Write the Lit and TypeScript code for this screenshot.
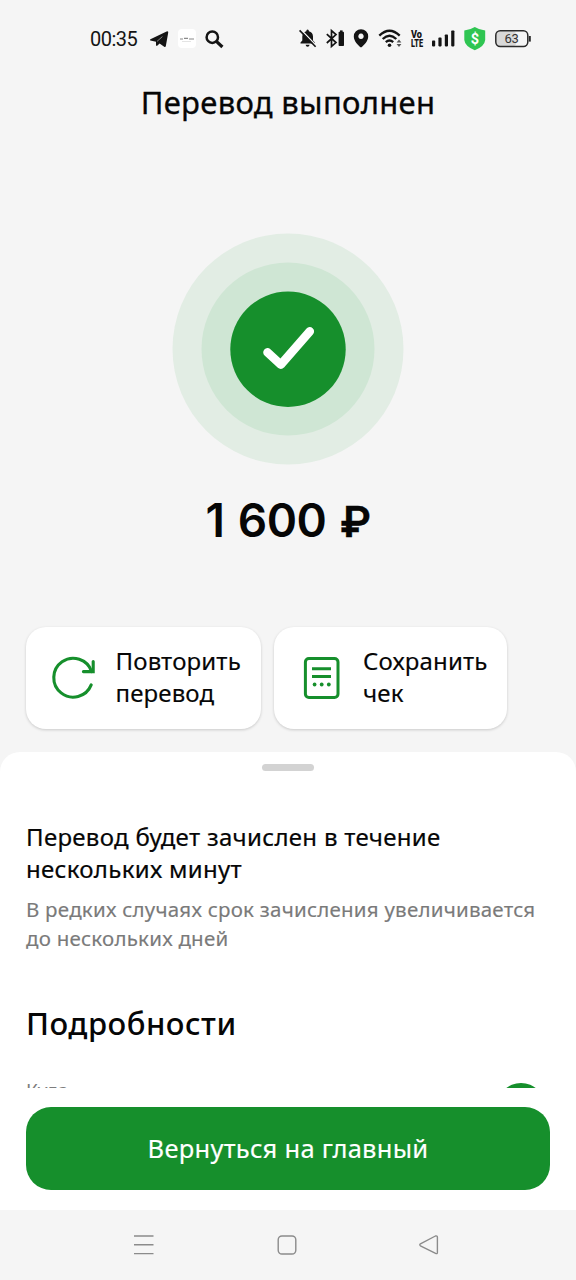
import { LitElement, html, css } from "lit";
import { customElement } from "lit/decorators.js";

@customElement("status-bar")
class StatusBar extends LitElement {
  static styles = css`
    :host { display: block; height: 78px; box-sizing: border-box; padding: 26px 44px 0 90px; font-family: Roboto, sans-serif; color: #141414; }
    .row { display: flex; justify-content: space-between; height: 26px; }
    .side { display: flex; }
    .time { width: 59px; font-size: 20px; line-height: 26px; letter-spacing: -0.5px; }
    .g8 { margin-right: 8px; }
    .g9 { margin-right: 9px; }
    .g10 { margin-right: 10px; }
    svg { display: block; flex: none; overflow: visible; }
    text { font-family: Roboto, sans-serif; }
  `;
  render() {
    return html`
      <div class="row">
        <div class="side">
          <span class="time">00:35</span>
          <svg class="g9" width="20" height="26" viewBox="149 26 20 26" fill="#141414">
            <path d="M150.4 39.2 L166.6 31.4 Q168.6 30.8 168.2 32.8 L165.8 46.2 Q165.4 47.4 164.2 46.7 L159.6 43.4 L157.2 45.8 Q156 46.4 156 44.8 L156 41.8 L150.4 40.4 Q149.4 39.9 150.4 39.2Z"/>
            <path d="M157 41.4 L162.4 36.6" stroke="#f5f5f5" stroke-width=".5"/>
          </svg>
          <svg class="g8" width="18" height="26" viewBox="178 26 18 26">
            <rect x="178" y="29" width="18" height="19" rx="4" fill="#fff"/>
            <path d="M180 39h3M184 38.4h4M189 39h5" stroke="#8a8a8a" stroke-width="1.2"/>
            <path d="M182 41.5h9" stroke="#ddd" stroke-width=".8"/>
          </svg>
          <svg width="20" height="26" viewBox="204 26 20 26" fill="none" stroke="#141414">
            <circle cx="212.3" cy="37.2" r="5.7" stroke-width="2.5"/>
            <path d="M216.4 41.3 L222.4 47" stroke-width="3.2"/>
          </svg>
        </div>
        <div class="side">
          <svg class="g8" width="19" height="26" viewBox="298 26 19 26">
            <path d="M300.5 43.6 V42.6 L302.3 40.6 V36.5 Q302.5 32.2 306.3 31.2 Q306.3 29.6 307.6 29.6 Q308.9 29.6 308.9 31.2 Q312.8 32.2 313 36.5 V40.6 L314.8 42.6 V43.6Z M305.6 44.8 h4 q-.3 2-2 2t-2-2Z" fill="#141414"/>
            <path d="M301 29.8 L316.6 46" stroke="#f5f5f5" stroke-width="1.4"/>
            <path d="M299.6 30.4 L315.6 46.8" stroke="#141414" stroke-width="1.6"/>
          </svg>
          <svg class="g9" width="19" height="26" viewBox="325 26 19 26" fill="none" stroke="#141414" stroke-width="1.7">
            <path d="M326.8 34.2 L336 42.6 L331.5 46.4 V30.6 L336 34.6 L326.8 43"/>
            <rect x="338.6" y="31.8" width="5.4" height="14.2" rx=".8" fill="#141414" stroke="none"/>
            <rect x="340" y="30.4" width="2.6" height="2" fill="#141414" stroke="none"/>
          </svg>
          <svg class="g10" width="15" height="26" viewBox="353.5 26 15 26">
            <path fill-rule="evenodd" fill="#141414" d="M361.5 29.2 A7.2 7.2 0 0 1 368.7 36.4 C368.7 41 364.4 45.2 361.5 47.6 C358.6 45.2 354.3 41 354.3 36.4 A7.2 7.2 0 0 1 361.5 29.2Z M361.5 33.6 a2.7 2.7 0 1 0 .01 0Z"/>
          </svg>
          <svg class="g9" width="23" height="26" viewBox="378 26 23 26" fill="none" stroke="#141414" stroke-width="2.3">
            <path d="M379.3 35.6 Q389.5 25.8 399.7 35.6"/>
            <path d="M382.7 39 Q389.5 32.4 396.3 39"/>
            <path d="M385.8 42.2 Q389.5 38.8 393.2 42.2"/>
            <circle cx="389.5" cy="45.2" r="1.8" fill="#141414" stroke="none"/>
            <path d="M396.6 42.4 L399 39.4 L401.4 42.4Z M396.6 44 L399 47 L401.4 44Z" fill="#555" stroke="none"/>
          </svg>
          <svg class="g9" width="13" height="26" viewBox="410 26 13 26" fill="#141414" font-weight="900">
            <text x="411" y="37.6" font-size="10.5" textLength="11" lengthAdjust="spacingAndGlyphs">Vo</text>
            <text x="411" y="46.8" font-size="10.5" textLength="12" lengthAdjust="spacingAndGlyphs">LTE</text>
          </svg>
          <svg class="g8" width="23" height="26" viewBox="432 26 23 26" fill="#141414">
            <rect x="432" y="40.6" width="3.2" height="5.8" rx=".8"/>
            <rect x="438.4" y="37.6" width="3.2" height="8.8" rx=".8"/>
            <rect x="444.8" y="34.4" width="3.2" height="12" rx=".8"/>
            <rect x="451.2" y="30.4" width="3.2" height="16" rx=".8"/>
          </svg>
          <svg class="g10" width="22" height="26" viewBox="463 26 22 26">
            <path d="M474.8 27 Q479.4 30 485.2 30.4 V40 Q484.6 46.4 474.8 50.2 Q465 46.4 464.3 40 V30.4 Q470.2 30 474.8 27Z" fill="#2fc552"/>
            <text x="474.8" y="43.6" font-size="14.5" font-weight="700" text-anchor="middle" fill="#fff">$</text>
          </svg>
          <svg width="37" height="26" viewBox="495 26 37 26">
            <rect x="496.3" y="31.2" width="20" height="15" rx="4" fill="#d8d8d8"/>
            <rect x="495.8" y="30.8" width="32" height="15.6" rx="4.4" fill="none" stroke="#2a2a2a" stroke-width="1.5"/>
            <path d="M529.8 36 v5.6" stroke="#2a2a2a" stroke-width="2"/>
            <text x="511.6" y="43.3" font-size="13" text-anchor="middle" fill="#333" letter-spacing="-.3">63</text>
          </svg>
        </div>
      </div>`;
  }
}

@customElement("app-root")
class AppRoot extends LitElement {
  static styles = css`
    :host { display: flex; flex-direction: column; width: 576px; height: 1280px; overflow: hidden; background: #f5f5f5; color: #060606; font-family: "Noto Sans", sans-serif; }
    * { box-sizing: border-box; }
    svg { display: block; flex: none; }
    h1, h2, p { margin: 0; }
    .title { height: 50px; line-height: 48px; text-align: center; font-size: 31px; letter-spacing: 0.3px; font-weight: 400; -webkit-text-stroke: 0.3px; white-space: nowrap; }
    .badge { margin: 105px auto 0; width: 232px; height: 232px; }
    .amount { height: 60px; margin-top: 25px; text-align: center; font: 600 46px/60px Inter, sans-serif; letter-spacing: -0.5px; word-spacing: 2.2px; white-space: nowrap; }
    .currency { font-size: 43px; -webkit-text-stroke: 0.4px; }
    .actions { display: flex; gap: 13px; margin-top: 77px; padding-left: 26px; }
    .action { display: flex; align-items: center; height: 102px; border: 0; padding: 0; border-radius: 20px; background: #fff; box-shadow: 0 1px 3px rgba(0,0,0,.18); color: inherit; font: 400 24px/32px "Noto Sans", sans-serif; letter-spacing: 0.15px; text-align: left; -webkit-text-stroke: 0.15px; white-space: nowrap; }
    .action span { margin-bottom: 2px; }
    .repeat { width: 235px; padding-left: 24px; gap: 17.5px; }
    .receipt { width: 233px; padding-left: 24px; gap: 17px; }
    .sheet { display: flex; flex-direction: column; height: 336px; margin-top: 23px; padding: 12px 26px 0; background: #fff; border-radius: 20px 20px 0 0; overflow: hidden; flex: none; }
    .handle { flex: none; align-self: center; width: 52px; height: 7px; border-radius: 4px; background: #d3d3d3; }
    .lead { margin-top: 50px; font-size: 24px; line-height: 32px; letter-spacing: 0.31px; -webkit-text-stroke: 0.2px; white-space: nowrap; }
    .note { margin-top: 10px; font-size: 20.5px; line-height: 29px; letter-spacing: 0.23px; color: #7a7a7a; -webkit-text-stroke: 0.15px; white-space: nowrap; }
    .heading { margin-top: 48px; font-size: 31px; line-height: 44px; letter-spacing: 0.5px; font-weight: 500; white-space: nowrap; }
    .detail { display: flex; justify-content: space-between; margin-top: 32px; padding-right: 5px; color: #7d7d7d; font-size: 19px; line-height: 28px; }
    .avatar { flex: none; width: 48px; height: 48px; margin-top: 6px; border-radius: 50%; background: #168f2c; }
    .footer { flex: none; height: 122px; padding: 19px 26px 0; background: #fff; }
    .home { display: block; width: 524px; height: 83px; border: 0; border-radius: 25px; background: #168f2c; color: #fff; font: 400 25.5px/83px "Noto Sans", sans-serif; letter-spacing: 0.27px; -webkit-text-stroke: 0.15px; padding: 0; white-space: nowrap; }
    .nav { flex: none; display: flex; justify-content: space-between; height: 70px; padding: 24px 136px 0 133px; }
  `;
  render() {
    return html`
      <status-bar></status-bar>
      <h1 class="title">Перевод выполнен</h1>
      <svg class="badge" viewBox="0 0 232 232">
        <circle cx="116" cy="116" r="115.5" fill="#e2ede4"/>
        <circle cx="116" cy="116" r="86.5" fill="#cfe6d4"/>
        <circle cx="116" cy="116.3" r="57.7" fill="#168f2c"/>
        <path d="M95.5 119.3 L108.8 131.6 L137.8 98.4" fill="none" stroke="#fff" stroke-width="8.6" stroke-linecap="round" stroke-linejoin="round"/>
      </svg>
      <div class="amount">1 600 <span class="currency">₽</span></div>
      <div class="actions">
        <button class="action repeat">
          <svg width="48" height="48" viewBox="0 0 48 48" fill="none" stroke="#168f2c" stroke-width="3.1" stroke-linecap="round">
            <path d="M41.2 30.9 A19.4 19.4 0 1 1 41.6 17.6"/>
            <path d="M43.2 7.6 V17.6 H33.4" stroke-linejoin="miter"/>
          </svg>
          <span>Повторить<br>перевод</span>
        </button>
        <button class="action receipt">
          <svg width="48" height="48" viewBox="0 0 48 48" fill="none" stroke="#168f2c" stroke-width="3">
            <rect x="7.4" y="4.6" width="32.6" height="38.8" rx="3.5"/>
            <path d="M14 14.7 H33 M14 22.6 H33"/>
            <g fill="#168f2c" stroke="none"><circle cx="16.6" cy="30.5" r="1.9"/><circle cx="23.7" cy="30.5" r="1.9"/><circle cx="30.8" cy="30.5" r="1.9"/></g>
          </svg>
          <span>Сохранить<br>чек</span>
        </button>
      </div>
      <section class="sheet">
        <div class="handle"></div>
        <p class="lead">Перевод будет зачислен в течение<br>нескольких минут</p>
        <p class="note">В редких случаях срок зачисления увеличивается<br>до нескольких дней</p>
        <h2 class="heading">Подробности</h2>
        <div class="detail"><span>Куда</span><div class="avatar"></div></div>
      </section>
      <div class="footer"><button class="home">Вернуться на главный</button></div>
      <nav class="nav">
        <svg width="22" height="22" viewBox="0 0 22 22" fill="none" stroke="#8b8b8b" stroke-width="1.4">
          <path d="M1 2 H20.5 M1 10.8 H20.5 M1 19.6 H20.5"/>
        </svg>
        <svg width="22" height="22" viewBox="0 0 22 22" fill="none" stroke="#8b8b8b" stroke-width="1.4">
          <rect x="2.2" y="2" width="17.6" height="18" rx="3.8"/>
        </svg>
        <svg width="22" height="22" viewBox="0 0 22 22" fill="none" stroke="#8b8b8b" stroke-width="1.4" stroke-linejoin="round">
          <path d="M2.4 9.8 L17.4 2 Q19.4 1.6 19.4 3.2 V18.4 Q19.4 20.2 17.6 19.4 L2.4 11.8 Q1.2 10.8 2.4 9.8Z"/>
        </svg>
      </nav>`;
  }
}
